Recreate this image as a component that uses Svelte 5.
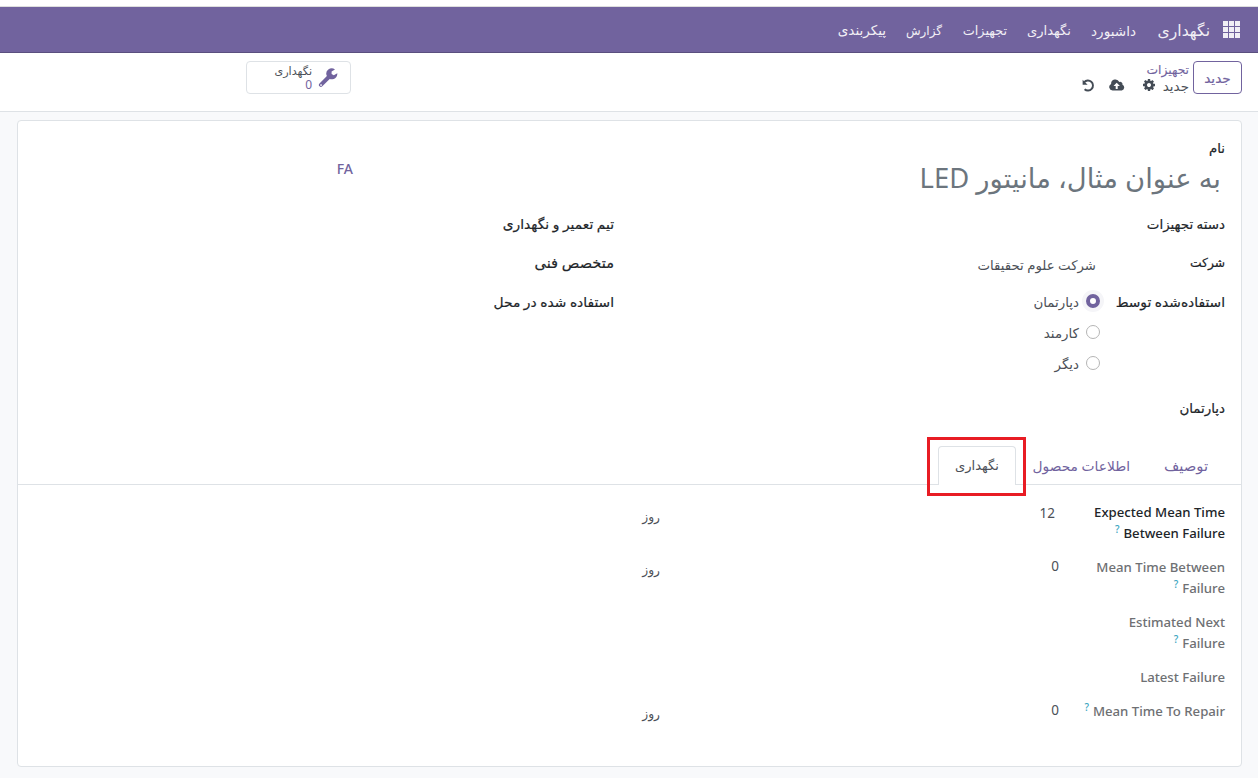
<script>
  const menu = [
    { text: 'داشبورد', w: 65, size: 13.6 },
    { text: 'نگهداری', w: 64, size: 13.1 },
    { text: 'تجهیزات', w: 65, size: 12.8 },
    { text: 'گزارش', w: 56, size: 12 },
    { text: 'پیکربندی', w: 64, size: 13.5 }
  ];
  const choices = ['دپارتمان', 'کارمند', 'دیگر'];
  let used = $state(0);
  const stats = [
    { lines: ['Expected Mean Time', 'Between Failure'], help: true, value: '12', unit: 'روز', strong: true },
    { lines: ['Mean Time Between', 'Failure'], help: true, value: '0', unit: 'روز' },
    { lines: ['Estimated Next', 'Failure'], help: true },
    { lines: ['Latest Failure'] },
    { lines: ['Mean Time To Repair'], help: true, value: '0', unit: 'روز' }
  ];
</script>

<div class="page" dir="rtl">
  <div class="strip"></div>
  <nav class="navbar">
    <svg class="apps" width="18" height="17" viewBox="0 0 18 17" fill="#f1eff5">
      {#each [0, 6, 12] as y}
        {#each [0, 6, 12] as x}
          <rect {x} {y} width="5" height="5" />
        {/each}
      {/each}
    </svg>
    <span class="brand">نگهداری</span>
    {#each menu as m}
      <span class="item" style="width:{m.w}px;font-size:{m.size}px">{m.text}</span>
    {/each}
  </nav>

  <header class="control">
    <button class="new">جدید</button>
    <div class="crumbs">
      <div class="parent">تجهیزات</div>
      <div class="current">
        <span>جدید</span>
        <svg class="gear" width="12" height="12" viewBox="0 0 1536 1536"><path fill="#444c56" fill-rule="evenodd" d="M1024 768q0 106-75 181t-181 75-181-75-75-181 75-181 181-75 181 75 75 181zm512-109v222q0 12-8 23t-20 13l-185 28q-19 54-39 91 35 50 107 138 10 12 10 25t-9 23q-27 37-99 108t-94 71q-12 0-26-9l-138-108q-44 23-91 38-16 136-29 186-7 28-36 28H657q-14 0-24.500-8.500T621 1506l-28-184q-49-16-90-37l-141 107q-10 9-25 9-14 0-25-11-126-114-165-168-7-10-7-23 0-12 8-23 15-21 51-66.500t54-70.500q-27-50-41-99L29 913q-13-2-21-12.500T0 877V655q0-12 8-23t19-13l186-28q14-46 39-92-40-57-107-138-10-12-10-24 0-10 9-23 26-36 98.500-107.500T337 135q13 0 26 10l138 107q44-23 91-38 16-136 29-186 7-28 36-28h222q14 0 24.500 8.500T915 30l28 184q49 16 90 37l142-107q9-9 24-9 13 0 25 10 129 119 165 170 7 8 7 22 0 12-8 23-15 21-51 66.500t-54 70.500q26 50 41 98l183 28q13 2 21 12.500t8 23.500z"/></svg>
        <svg class="cloud" width="16" height="12" viewBox="0 0 16 12"><path fill="#444c56" fill-rule="evenodd" d="M3.600 11.500A3.500 3.500 0 0 1 2.100 4.900 4.300 4.300 0 0 1 10.300 3 2.300 2.300 0 0 1 13.400 5.800 3 3 0 0 1 12.800 11.500ZM7.700 3.800 4.500 7H6.700v3h2V7h2.200Z"/></svg>
        <svg class="undo" width="13" height="13" viewBox="0 0 13 13"><path fill="none" stroke="#444c56" stroke-width="1.900" d="M2.200 3.200A5 5 0 1 1 2.600 10.200"/><path fill="#444c56" d="M.6.700v5h5z"/></svg>
      </div>
    </div>
    <button class="stat">
      <svg width="20" height="20" viewBox="0 0 20 20"><path fill="#71639e" fill-rule="evenodd" d="M11.700 10.900 4.300 18.300Q2.900 19.700 1.500 18.300 .1 16.900 1.500 15.500L8.900 8.100A5.400 5.400 0 0 1 17 1.400L13.600 3.400V6L15.800 7.200 19.300 5.200A5.500 5.500 0 0 1 11.700 10.900ZM3 16.200a.8.8 0 1 0 .1 0z"/></svg>
      <span class="stat-text"><span>نگهداری</span><b>0</b></span>
    </button>
  </header>

  <main class="sheet">
    <div class="title">
      <div>
        <div class="label name">نام</div>
        <div class="placeholder">به عنوان مثال، مانیتور LED</div>
      </div>
      <span class="lang">FA</span>
    </div>

    <div class="groups">
      <div class="group">
        <div class="row"><span class="label category">دسته تجهیزات</span></div>
        <div class="row"><span class="label firm">شرکت</span><span class="company">شرکت علوم تحقیقات</span></div>
        <div class="row used">
          <span class="label">استفاده‌شده توسط</span>
          <div class="radios">
            {#each choices as c, i}
              <label class="radio"><input type="radio" name="used" checked={used === i} onchange={() => (used = i)} /><span>{c}</span></label>
            {/each}
          </div>
        </div>
        <div class="row"><span class="label department">دپارتمان</span></div>
      </div>
      <div class="group">
        <div class="row"><span class="label">تیم تعمیر و نگهداری</span></div>
        <div class="row"><span class="label expert">متخصص فنی</span></div>
        <div class="row"><span class="label">استفاده شده در محل</span></div>
      </div>
    </div>

    <div class="tabs">
      <span class="tab t1">توصیف</span>
      <span class="tab t2">اطلاعات محصول</span>
      <span class="tab active">نگهداری<i class="mark"></i></span>
    </div>

    <div class="stats">
      {#each stats as s}
        <div class="line" class:strong={s.strong}>
          <div class="caption">
            {#each s.lines as l, i}
              <div><bdi>{l}</bdi>{#if s.help && i === s.lines.length - 1}<sup>?</sup>{/if}</div>
            {/each}
          </div>
          <span class="num">{s.value ?? ''}</span>
          <span class="unit">{s.unit ?? ''}</span>
        </div>
      {/each}
    </div>
  </main>
</div>

<style>
  :global(body) { margin: 0; background: #f8f9fa; }
  .page { height: 778px; overflow: hidden; box-sizing: border-box; background: #f8f9fb; font-family: 'Noto Sans', 'DejaVu Sans', sans-serif; font-size: 14px; line-height: 21px; color: #4c5057; }
  .page * { box-sizing: border-box; white-space: nowrap; }
  .strip { height: 7px; background: #fff; border-bottom: 1px solid #dedede; }
  .navbar { display: flex; height: 46px; background: #71639e; border-bottom: 1px solid #5a4f7f; padding-right: 17px; color: #f1eff5; align-items: center; }
  .apps { flex: none; }
  .brand { width: 87px; padding-right: 13px; font-size: 15.6px; padding-top: 2px; }
  .item { padding-top: 1px; }
  .control { display: flex; height: 59px; background: #fff; border-bottom: 1px solid #dee2e6; padding: 8px 16px 0 0; align-items: flex-start; }
  button { font: inherit; background: #fff; border-radius: 4px; padding: 0; }
  .new { width: 49px; height: 33px; border: 1px solid #71639e; color: #71639e; font-size: 13.7px; -webkit-text-stroke: 0.2px; }
  .crumbs { width: 842px; padding-right: 4px; line-height: 17px; font-size: 13.5px; }
  .parent { color: #71639e; font-size: 12.3px; -webkit-text-stroke: 0.1px; }
  .current { display: flex; align-items: center; height: 17px; }
  .current svg { margin-bottom: 3px; }
  .gear { margin-right: 8px; }
  .cloud { margin-right: 18px; }
  .undo { margin-right: 14px; }
  .stat { width: 105px; height: 33px; border: 1px solid #dee2e6; display: flex; align-items: center; padding-right: 12px; color: #4c5057; }
  .stat-text { display: flex; flex-direction: column; font-size: 12px; line-height: 14px; margin-right: 6px; align-items: flex-start; }
  .stat-text span { font-size: 11.2px; }
  .stat-text b { font-weight: 400; color: #71639e; }
  .sheet { margin: 8px 16px 0 0; width: 1225px; height: 647px; border: 1px solid #dee2e6; border-radius: 4px; background: #fff; }
  .label { color: #212529; font-size: 13.8px; -webkit-text-stroke: 0.2px; margin-top: -1px; }
  .name { font-size: 13.3px; margin-top: 0; }
  .category, .department { font-size: 13.4px; margin-top: 0; }
  .firm { font-size: 12.3px; }
  .label.expert { font-size: 14.6px; }
  .title { display: flex; height: 93px; padding: 17px 16px 0 0; }
  .title > div { width: 872px; }
  .placeholder { font-size: 27.4px; line-height: 38px; padding-right: 4px; color: #6c757d; }
  .lang { color: #71639e; font-weight: 500; font-size: 14px; padding-top: 20px; }
  .groups { display: flex; height: 232px; padding-right: 16px; }
  .group { width: 611px; flex: none; }
  .group + .group { width: 400px; }
  .row { height: 39px; display: flex; }
  .row .label { width: 125px; flex: none; }
  .company { padding: 2px 4px 0 0; font-size: 13.3px; }
  .row.used { height: 106px; }
  .radios { display: flex; flex-direction: column; gap: 10px; margin-top: -1px; font-size: 13.4px; }
  .radio { display: flex; height: 21px; align-items: center; }
  .radio span { padding-top: 2px; }
  input { appearance: none; width: 14px; height: 14px; border: 1px solid #b5b5b5; border-radius: 50%; margin: 0 0 2px 7px; }
  input:checked { border: 4px solid #71639e; box-shadow: 0 0 0 4px #f5f5f8; }
  .tabs { display: flex; height: 39px; border-bottom: 1px solid #dee2e6; padding-right: 16px; color: #71639e; line-height: 40px; font-size: 13.1px; }
  .tab { padding-right: 17px; height: 39px; }
  .t1 { width: 78px; font-size: 14.8px; line-height: 38px; }
  .t2 { width: 131px; font-size: 13.8px; }
  .active { width: 78px; padding-right: 16px; border: 1px solid #dee2e6; border-bottom: 0; border-radius: 4px 4px 0 0; background: #fff; color: #4c5057; position: relative; line-height: 37px; }
  .mark { position: absolute; left: -12px; top: -10px; width: 99px; height: 59px; border: 3px solid #e81c24; }
  .stats { display: flex; flex-direction: column; gap: 13px; padding: 17px 16px 0 0; }
  .line { display: flex; color: #6e7073; }
  .caption { width: 150px; font-size: 13.2px; font-weight: 500; }
  .strong .caption { color: #212529; }
  sup { font-size: 10px; color: #3aa6bf; line-height: 0; margin-right: 4px; vertical-align: 5px; }
  .num { width: 415px; padding-right: 16px; margin-top: -1px; color: #4c5057; font-size: 13.5px; }
  .strong .num { padding-right: 20px; margin-top: 1px; }
  .unit { color: #4c5057; padding-top: 2px; font-size: 12.2px; }
  .strong .unit { padding-top: 4px; }
</style>
